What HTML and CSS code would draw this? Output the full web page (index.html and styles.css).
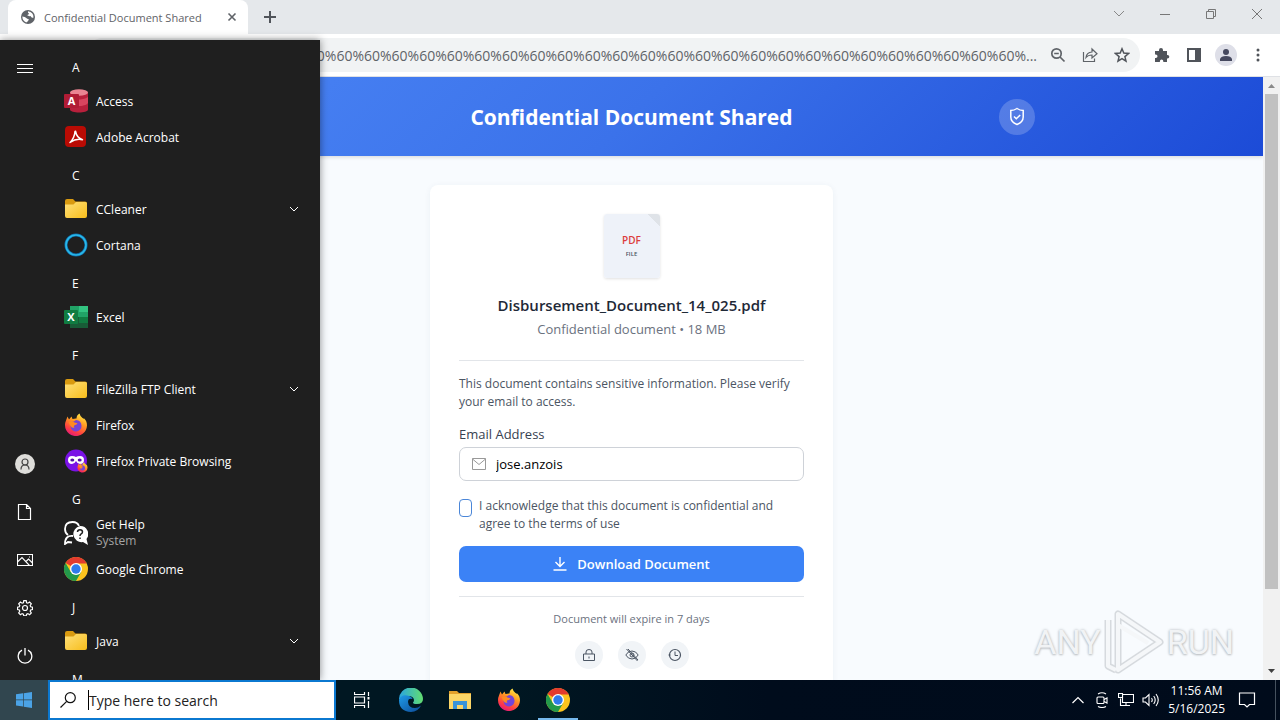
FILE: index.html
```html
<!DOCTYPE html>
<html lang="en">
<head>
<meta charset="utf-8">
<title>Confidential Document Shared</title>
<link rel="stylesheet" href="styles.css">
</head>
<body>
<svg class="defs" aria-hidden="true">
  <defs>
    <linearGradient id="gFolder" x1="0" y1="0" x2="1" y2="1"><stop offset="0" stop-color="#ffe07a"/><stop offset="1" stop-color="#f7bd1b"/></linearGradient>
    <linearGradient id="gFox" x1="0.8" y1="0" x2="0.3" y2="1"><stop offset="0" stop-color="#fff04a"/><stop offset=".4" stop-color="#ff9a22"/><stop offset=".75" stop-color="#ff4040"/><stop offset="1" stop-color="#e3187c"/></linearGradient>
    <linearGradient id="gEdge" x1="0" y1="0" x2="1" y2="0"><stop offset="0" stop-color="#2aa5e0"/><stop offset="1" stop-color="#62dd70"/></linearGradient>
    <linearGradient id="gEdge2" x1="0" y1="0" x2="1" y2="1"><stop offset="0" stop-color="#1f9be8"/><stop offset="1" stop-color="#0c4a97"/></linearGradient>
    <symbol id="folder" viewBox="0 0 24 24"><path d="M1 4q0-2 2-2h6l2.500 2.500H21q2 0 2 2V9H1z" fill="#d99a10"/><path d="M1 7.500h8.500L12 5h9.500Q23 5 23 6.500V19q0 2-2 2H3q-2 0-2-2z" fill="url(#gFolder)"/></symbol>
    <symbol id="firefox" viewBox="0 0 24 24"><path d="M23 12.500A11 11 0 1 1 2 7.500L3.500 3.500 5 6.500 7.500 3.500 8.500 6Q11 5.300 12.500 5.500 12.500 2 15.500.5 16 3 18.500 5 20 6 20.200 5.500 23 8 23 12.500z" fill="url(#gFox)"/><path d="M12 7q5 .3 5.500 5.500a5.500 5.500 0 0 1-11 1Q6 10 8 8.500q1 1 4-1.500z" fill="#7344d8"/><path d="M4.500 9q4-1.500 6 .5l3 .8q-.5 1.700-3 2-1.500.7 0 2.200-3.500 1.500-6-5.500z" fill="#ff8a20"/></symbol>
    <symbol id="chrome" viewBox="0 0 24 24"><circle cx="12" cy="12" r="12" fill="#fcc31e"/><path d="M12 12 1.600 6a12 12 0 0 1 20.800 0L22.400 6.500H12z" fill="#e33b2e"/><path d="M1.600 6A12 12 0 0 0 12 24l5.200-9H12L6.800 15z" fill="#23994b"/><circle cx="12" cy="12" r="6" fill="#fff"/><circle cx="12" cy="12" r="4.700" fill="#2f7bec"/></symbol>
    <symbol id="down" viewBox="0 0 12 12"><path d="M2 4l4 4 4-4" fill="none" stroke="currentColor" stroke-width="1"/></symbol>
  </defs>
</svg>

<div class="desktop">
  <div class="browser">
    <div class="tabstrip">
      <div class="tab">
        <svg class="i16" viewBox="0 0 16 16"><circle cx="8" cy="8" r="7" fill="#5f6368"/><path d="M2.300 7.500q3 .2 4 1.500t2.500 1q-.3 3-2.500 3.600Q2.500 12 2.300 7.500zM8 2.300q-.5 1.700 1 2.200-.5 1.500-2 1.500 1.500 1.500 3.500 1 1 2.500 3 1.500Q13.500 3 8 2.300z" fill="#fff"/></svg>
        <span class="tab-title">Confidential Document Shared</span>
        <button class="plain" aria-label="Close tab"><svg class="i16" viewBox="0 0 16 16"><path d="M4.500 4.500l7 7m0-7l-7 7" stroke="#5f6368" stroke-width="1.600"/></svg></button>
      </div>
      <button class="plain" aria-label="New tab"><svg class="i16" viewBox="0 0 16 16"><path d="M8 2v12M2 8h12" stroke="#50545a" stroke-width="2"/></svg></button>
      <div class="window-buttons">
        <button class="plain" aria-label="Search tabs"><svg class="i16" viewBox="0 0 16 16"><path d="M3 5l5 5 5-5" fill="none" stroke="#888" /></svg></button>
        <button class="plain" aria-label="Minimize"><svg class="i16" viewBox="0 0 16 16"><path d="M3 8.500h10" stroke="#777"/></svg></button>
        <button class="plain" aria-label="Restore"><svg class="i16" viewBox="0 0 16 16"><path d="M3.500 5.500h7v7h-7zM5.500 5.500v-2h7v7h-2" fill="none" stroke="#777"/></svg></button>
        <button class="plain" aria-label="Close"><svg class="i16" viewBox="0 0 16 16"><path d="M3 3l10 10M13 3L3 13" stroke="#777"/></svg></button>
      </div>
    </div>
    <div class="toolbar">
      <div class="omnibox">
        <input class="url" type="text" aria-label="Address" value="%60%60%60%60%60%60%60%60%60%60%60%60%60%60%60%60%60%60%60%60%60%60%60%60%60%60%60%60%60%60%60%...">
        <button class="plain" aria-label="Zoom"><svg class="i16" viewBox="0 0 16 16"><circle cx="6.500" cy="6.500" r="4.700" fill="none" stroke="#5f6368" stroke-width="1.700"/><path d="M4.200 6.500h4.600M10 10l4.500 4.500" stroke="#5f6368" stroke-width="1.700"/></svg></button>
        <button class="plain" aria-label="Share"><svg class="i16" viewBox="0 0 16 16"><path d="M1.500 5v9.500h11v-3M4 10.500q.5-5 6-5.500V2l5 4.700-5 4.300V8q-4 0-6 2.500z" fill="none" stroke="#5f6368" stroke-width="1.200"/></svg></button>
        <button class="plain" aria-label="Bookmark"><svg class="i16" viewBox="0 0 16 16"><path d="M8 1.800l1.800 4.300 4.700.4-3.600 3.100 1.100 4.600L8 11.700l-4 2.500 1.100-4.600L1.500 6.500l4.700-.4z" fill="none" stroke="#50545a" stroke-width="1.500"/></svg></button>
      </div>
      <button class="plain" aria-label="Extensions"><svg class="i16" viewBox="0 0 16 16"><path d="M1 4h4V3a2 2 0 0 1 4 0v1h4v4h.5a1.800 1.800 0 0 1 0 3.600H13V15H9.300v-.7a1.700 1.700 0 0 0-3.400 0v.7H1v-4h.8a1.700 1.700 0 0 0 0-3.400H1z" fill="#50545a"/></svg></button>
      <button class="plain" aria-label="Side panel"><svg class="i16" viewBox="0 0 16 16"><path d="M1 1h14v14H1zM3 3v10h6V3z" fill="#50545a" fill-rule="evenodd"/></svg></button>
      <button class="plain avatar" aria-label="Profile"><svg class="i16" viewBox="0 0 16 16"><circle cx="8" cy="5" r="3" fill="#45485e"/><path d="M2 14v-2q1-3 6-3t6 3v2z" fill="#45485e"/></svg></button>
      <button class="plain" aria-label="Menu"><svg class="i16" viewBox="0 0 16 16"><g fill="#50545a"><circle cx="8" cy="3" r="1.500"/><circle cx="8" cy="8" r="1.500"/><circle cx="8" cy="13" r="1.500"/></g></svg></button>
    </div>
    <div class="viewport">
      <div class="page">
        <header class="banner">
          <div class="banner-inner">
            <h1>Confidential Document Shared</h1>
            <span class="shield"><svg class="i20" viewBox="0 0 20 20" fill="none" stroke="#fff" stroke-width="1.500"><path d="M10 1.500Q7 3.500 3.800 3.500V10q0 5 6.200 7.500 6.200-2.500 6.200-7.500V3.500Q13 3.500 10 1.500zM7 9.500l2.300 2.300L13.200 8"/></svg></span>
          </div>
        </header>
        <main class="card">
          <div class="pdf"><span class="pdf-type">PDF</span><span class="pdf-file">FILE</span></div>
          <h2>Disbursement_Document_14_025.pdf</h2>
          <p class="meta">Confidential document • 18 MB</p>
          <form class="verify">
            <p class="copy">This document contains sensitive information. Please verify your email to access.</p>
            <label class="field-label" for="email">Email Address</label>
            <div class="field">
              <svg class="i14" viewBox="0 0 14 14" fill="none" stroke="#999" stroke-width="1"><path d="M.5 1.500h13v11H.5zM.5 2l6.500 5.500L13.500 2"/></svg>
              <input id="email" type="text" value="jose.anzois">
            </div>
            <div class="agree">
              <input id="agree" type="checkbox">
              <label for="agree">I acknowledge that this document is confidential and agree to the terms of use</label>
            </div>
            <button class="download" type="button"><svg class="i14" viewBox="0 0 14 14" fill="none" stroke="#fff" stroke-width="1.400"><path d="M7 0v9.500M2.500 5L7 9.500 11.500 5M.5 13h13"/></svg>Download Document</button>
          </form>
          <footer class="foot">
            <p>Document will expire in 7 days</p>
            <div class="badges">
              <span class="badge"><svg class="i14" viewBox="0 0 14 14" fill="none" stroke="#4b5563"><path d="M1.500 6h11v6.500h-11zM4 6V4q0-2.500 3-2.500T10 4v2M7 8.500v2"/></svg></span>
              <span class="badge"><svg class="i14" viewBox="0 0 14 14" fill="none" stroke="#4b5563"><path d="M.8 7Q3 3 7 3t6.200 4Q11 11 7 11T.8 7zM1.500 1l11 12M3 1l10 11"/><circle cx="7" cy="7" r="2"/></svg></span>
              <span class="badge"><svg class="i14" viewBox="0 0 14 14" fill="none" stroke="#4b5563"><circle cx="7" cy="7" r="5.500" stroke-width="1.200"/><path d="M7 3.500V7.500h3M.5 7h2"/></svg></span>
            </div>
          </footer>
        </main>
      </div>
      <div class="scrollbar">
        <svg class="arrow" viewBox="0 0 17 17"><path d="M5 11l3.500-4L12 11z" fill="#8a8a8a"/></svg>
        <div class="thumb"></div>
        <svg class="arrow" viewBox="0 0 17 17"><path d="M5 6l3.500 4L12 6z" fill="#404040"/></svg>
      </div>
      <div class="watermark">
        <span>ANY</span>
        <svg viewBox="0 0 60 64" fill="none" stroke-linejoin="round"><g stroke="#c9cdd1" stroke-width="7"><path d="M14 4v56L56 32z"/><path d="M4 10v46l8 4"/></g><g stroke="#f4f6f7" stroke-width="4"><path d="M14 4v56L56 32z"/><path d="M4 10v46l8 4M14 15l30 18"/></g></svg>
        <span>RUN</span>
      </div>
    </div>
  </div>

  <aside class="start">
    <nav class="rail" aria-label="Start">
      <button class="plain" aria-label="Expand"><svg class="i16" viewBox="0 0 16 16"><path d="M0 4.500h16M0 8.500h16M0 12.500h16" stroke="#fff"/></svg></button>
      <span class="rail-space"></span>
      <button class="plain" aria-label="User"><svg class="i20" viewBox="0 0 20 20"><circle cx="10" cy="10" r="10" fill="#deddda"/><g fill="none" stroke="#444" stroke-width="1.200"><circle cx="10" cy="8" r="3"/><path d="M6 15.500q0-4.500 4-4.500t4 4.500"/></g></svg></button>
      <button class="plain" aria-label="Documents"><svg class="i16" viewBox="0 0 16 16"><path d="M1.500.5h8l4 4v11h-12zM9.500.5v4h4" fill="none" stroke="#fff" stroke-width="1.200"/></svg></button>
      <button class="plain" aria-label="Pictures"><svg class="i16" viewBox="0 0 16 16"><path d="M.5 2.500h15v11H.5zM.5 10L5 5.500l7.500 8M9 9.500L11.500 7l4 4M12 5h1" fill="none" stroke="#fff" stroke-width="1.100"/></svg></button>
      <button class="plain" aria-label="Settings"><svg class="i16" viewBox="0 0 16 16" fill="none" stroke="#fff" stroke-width="1.200"><circle cx="8" cy="8" r="2.500"/><path d="M6.800.7h2.400l.4 2 1.300.5 1.700-1.100 1.700 1.700-1.100 1.700.5 1.300 1.800.4v2.400l-1.800.4-.5 1.300 1.100 1.700-1.700 1.700-1.700-1.100-1.300.5-.4 1.800H6.800l-.4-1.800-1.300-.5L3.400 14.700l-1.700-1.700 1.100-1.700L2.300 10l-1.800-.4V7.200l1.800-.4.500-1.300L1.700 3.800l1.700-1.700 1.700 1.100 1.300-.5z"/></svg></button>
      <button class="plain" aria-label="Power"><svg class="i16" viewBox="0 0 16 16" fill="none" stroke="#fff" stroke-width="1.300"><path d="M8 0v7.500M5 2.200a6.800 6.800 0 1 0 6 0"/></svg></button>
    </nav>
    <ul class="apps">
      <li class="letter">A</li>
      <li><svg class="i24" viewBox="0 0 24 24"><path d="M6 3.500v17c0 4 18 4 18 0v-17z" fill="#b8203c"/><path d="M6 9v6c3 3 15 3 18-1V8c-4 3-14 4-18 1z" fill="#d9455f"/><ellipse cx="15" cy="3.500" rx="9" ry="3.300" fill="#ea8492"/><rect y="5" width="15" height="14" rx="1" fill="#b01c35"/><text x="7.500" y="16" class="glyph">A</text></svg>Access</li>
      <li><svg class="i24" viewBox="0 0 24 24"><rect x="1" y="1" width="21" height="21" rx="4" fill="#b90b04"/><path d="M6 17.500Q10.500 13 11 6.500q.8-1 .8 1 1 5 6.700 7.300-6-1.800-12.500 2.700z" fill="none" stroke="#fff" stroke-width="1.500" stroke-linejoin="round"/></svg>Adobe Acrobat</li>
      <li class="letter">C</li>
      <li><svg class="i24"><use href="#folder"/></svg>CCleaner<svg class="i12 more"><use href="#down"/></svg></li>
      <li><svg class="i24" viewBox="0 0 24 24"><circle cx="12" cy="12" r="10" fill="none" stroke="#0f6fae" stroke-width="3"/><circle cx="12" cy="12" r="10" fill="none" stroke="#29b9e8" stroke-width="1.600"/></svg>Cortana</li>
      <li class="letter">E</li>
      <li><svg class="i24" viewBox="0 0 24 24"><path d="M6 1h9v11H6z" fill="#21a366"/><path d="M15 1h9v6h-9z" fill="#33c481"/><path d="M15 7h9v5h-9z" fill="#21a366"/><path d="M6 12h9v11H6z" fill="#185c37"/><path d="M15 12h9v6h-9z" fill="#107c41"/><path d="M15 18h9v5h-9z" fill="#185c37"/><rect y="5" width="14" height="14" rx="1" fill="#107c41"/><text x="7" y="16" class="glyph">X</text></svg>Excel</li>
      <li class="letter">F</li>
      <li><svg class="i24"><use href="#folder"/></svg>FileZilla FTP Client<svg class="i12 more"><use href="#down"/></svg></li>
      <li><svg class="i24"><use href="#firefox"/></svg>Firefox</li>
      <li><svg class="i24" viewBox="0 0 24 24"><circle cx="12" cy="11.500" r="11" fill="#7a12e6"/><path d="M4 11q0-4 4-4 2.500 0 4 1 1.500-1 4-1 4 0 4 4t-4 4q-2.500 0-4-3-1.500 3-4 3-4 0-4-4z" fill="#fff"/><ellipse cx="8.300" cy="11" rx="2" ry="1.500" fill="#5310a8"/><ellipse cx="15.700" cy="11" rx="2" ry="1.500" fill="#5310a8"/><svg x="13" y="13" width="11" height="11"><use href="#firefox"/></svg></svg>Firefox Private Browsing</li>
      <li class="letter">G</li>
      <li><svg class="i24" viewBox="0 0 24 24"><path d="M4 14q-3-2-3-6 0-7 7.500-7 5 0 6.500 4M9 15q-8-1-8 8l3-2 4 .5" fill="none" stroke="#fff" stroke-width="1.800"/><path d="M16 5a8 8 0 0 1 6.500 13l1.500 6-5-3A8 8 0 1 1 16 5z" fill="#fff"/><path d="M13.500 11q0-2.300 2.500-2.300t2.500 2.300q0 1.200-1.500 2-1 .7-1 2M16 16.500v1.600" fill="none" stroke="#1f1f1f" stroke-width="1.500"/></svg><span class="two">Get Help<small>System</small></span></li>
      <li><svg class="i24"><use href="#chrome"/></svg>Google Chrome</li>
      <li class="letter">J</li>
      <li><svg class="i24"><use href="#folder"/></svg>Java<svg class="i12 more"><use href="#down"/></svg></li>
      <li class="letter">M</li>
    </ul>
  </aside>
</div>

<div class="taskbar">
  <button class="plain start-button" aria-label="Start"><svg class="i16" viewBox="0 0 16 16"><path d="M0 2.300l7-1v6.300H0zM7.700 1.200L16 0v7.600H7.700zM0 8.300h7v6.300l-7-1zM7.700 8.300H16V16l-8.300-1.200z" fill="#4ba3e6"/></svg></button>
  <div class="search">
    <svg class="i16" viewBox="0 0 16 16" fill="none" stroke="#111" stroke-width="1.200"><circle cx="10.300" cy="5.700" r="5"/><path d="M6.700 9.300L.5 15.500"/></svg>
    <input type="text" aria-label="Search" placeholder="Type here to search">
  </div>
  <div class="pins">
    <button class="plain" aria-label="Task view"><svg class="i16" viewBox="0 0 16 16" fill="none" stroke="#fff" stroke-width="1.200"><path d="M.5 0v2.500h10V0M.5 5h10v6H.5zM.5 16v-2.500h10V16M14.500 0v4M14.500 9v7"/><path d="M13.500 5h2v2.500h-2z" fill="#fff" stroke="none"/></svg></button>
    <button class="plain" aria-label="Edge"><svg class="i24" viewBox="0 0 24 24"><path d="M0 12A12 12 0 0 1 24 11q0 5-6 5-4 0-4-1.500 1-1 1-2.500-.5-4-6-4Q2 8 0 12z" fill="url(#gEdge)"/><path d="M0 12Q2 6.500 8 7.500q5 1 5.500 3.500Q9 9.500 9 14q.5 6 7 6 3 0 6-2.500Q19 24 12 24 0 23.500 0 12z" fill="url(#gEdge2)"/></svg></button>
    <button class="plain" aria-label="File Explorer"><svg class="i24" viewBox="0 0 24 24"><path d="M1 3h8l2 2h12v4H1z" fill="#e2a12c"/><path d="M1 6h22v15H1z" fill="#fbd667"/><path d="M5 21v-8h14v8h-4v-4H9v4z" fill="#3a94d8"/></svg></button>
    <button class="plain" aria-label="Firefox"><svg class="i24"><use href="#firefox"/></svg></button>
    <button class="plain active" aria-label="Chrome"><svg class="i24"><use href="#chrome"/></svg></button>
  </div>
  <div class="tray">
    <svg class="i16" viewBox="0 0 16 16"><path d="M2.500 11L8 5.500l5.500 5.500" fill="none" stroke="#fff" stroke-width="1.200"/></svg>
    <svg class="i16" viewBox="0 0 16 16" fill="none" stroke="#fff" stroke-width="1.100"><rect x="3" y="5" width="7" height="6.500" rx="1"/><path d="M10 7.500l3-1.500v5l-3-1.500M4 2q4-2.500 8 0M4 14.500q4 2 8 0"/></svg>
    <svg class="i16" viewBox="0 0 16 16" fill="none" stroke="#fff" stroke-width="1.100"><path d="M4.500 2.500h11v8h-11v-8M8 10.500v3M5 13.500h7M2.500 6.500v7h3"/><path d="M.5 1.500h4v4h-4z" fill="#031523"/></svg>
    <svg class="i18" viewBox="0 0 18 18" fill="none" stroke="#fff" stroke-width="1.100"><path d="M1 7h2.500L7 3.500v11L3.500 11H1zM9.500 7q1.500 2 0 4M11.700 5q3 4 0 8M14 3q4.500 6 0 12"/></svg>
    <div class="clock"><span>11:56 AM</span><span>5/16/2025</span></div>
    <svg class="i18 notes" viewBox="0 0 18 18"><path d="M1.500 2h15v11.500h-5L9 16l-2.500-2.500h-5z" fill="none" stroke="#fff" stroke-width="1.200"/></svg>
  </div>
</div>
</body>
</html>
```

FILE: styles.css
```css
* { box-sizing: border-box; }
body { margin: 0; height: 100vh; display: flex; flex-direction: column; overflow: hidden; font-family: "Open Sans", "Noto Sans", sans-serif; font-size: 12px; color: #1f2937; }
h1, h2, p, ul { margin: 0; padding: 0; }
input, button { font: inherit; }
svg { display: block; flex: none; }
.defs { position: absolute; width: 0; height: 0; }
.i12 { width: 12px; height: 12px; }
.i14 { width: 14px; height: 14px; }
.i16 { width: 16px; height: 16px; }
.i18 { width: 18px; height: 18px; }
.i20 { width: 20px; height: 20px; }
.i24 { width: 24px; height: 24px; }
.plain { display: flex; align-items: center; justify-content: center; padding: 0; border: 0; background: none; }

.desktop { position: relative; flex: 1; min-height: 0; display: flex; }
.browser { flex: 1; min-width: 0; display: flex; flex-direction: column; background: #fff; }

.tabstrip { height: 34px; display: flex; align-items: center; background: #e5e8eb; padding-left: 8px; gap: 14px; }
.tab { width: 240px; height: 34px; display: flex; align-items: center; padding: 0 8px 0 12px; gap: 8px; background: #fff; border-radius: 8px 8px 0 0; }
.tab-title { flex: 1; white-space: nowrap; font-size: 11px; color: #5f6368; }
.window-buttons { margin-left: auto; display: flex; align-self: stretch; padding-bottom: 6px; }
.window-buttons .plain { width: 46px; }

.toolbar { height: 43px; display: flex; align-items: center; gap: 16px; padding: 0 14px 0 86px; border-bottom: 1px solid #dfe1e5; }
.omnibox { flex: 1; min-width: 0; height: 34px; display: flex; align-items: center; gap: 16px; padding: 0 10px 0 20px; margin-right: -2px; border-radius: 17px; background: #f1f3f4; }
.url { flex: 1; min-width: 0; border: 0; padding: 0; margin-right: -3px; background: none; text-align: right; font-size: 14px; color: #5f6368; }
.avatar { width: 22px; height: 22px; margin: 0 -3px; border-radius: 50%; background: #dedfe8; }

.viewport { position: relative; flex: 1; min-height: 0; display: flex; }
.page { flex: 1; min-width: 0; overflow: hidden; background: #f8fbfe; }
.banner { padding: 0 24px; background: linear-gradient(135deg, #4f8af8, #3b72ea 50%, #1c4bd7); box-shadow: 0 1px 4px rgba(0, 0, 0, .15); }
.banner-inner { max-width: 807px; height: 79px; margin: 0 auto; display: grid; grid-template-columns: 1fr auto 1fr; align-items: center; }
.banner h1 { grid-column: 2; font-size: 21px; line-height: 28px; font-weight: 700; color: #fff; }
.shield { justify-self: end; width: 36px; height: 36px; display: flex; align-items: center; justify-content: center; border-radius: 50%; background: rgba(255, 255, 255, .2); }

.card { width: 403px; max-width: 100%; margin: 29px auto; padding: 29px; background: #fff; border-radius: 8px; box-shadow: 0 1px 6px rgba(30, 60, 100, .06); text-align: center; line-height: 18px; }
.pdf { width: 56px; height: 64px; margin: 0 auto 15px; display: flex; flex-direction: column; align-items: center; justify-content: center; border-radius: 3px; background: linear-gradient(45deg, #eef2f9 0 90%, #dfe3e8 90%); box-shadow: 0 1px 3px rgba(0, 0, 0, .12); }
.pdf-type { font-size: 10px; line-height: 16px; font-weight: 600; color: #dc3c3c; }
.pdf-file { font-size: 6px; line-height: 13px; font-weight: 600; color: #4b5563; }
.card h2 { font-size: 15px; line-height: 24px; font-weight: 600; color: #1f2937; }
.meta { margin-top: 3px; font-size: 13px; color: #6b7280; }
.verify { margin-top: 22px; padding-top: 14px; border-top: 1px solid #e2e5e9; display: flex; flex-direction: column; text-align: left; font-size: 13px; }
.copy, .agree { font-size: 12px; color: #4b5563; }
.field-label { margin-top: 14px; color: #374151; }
.field { height: 34px; margin-top: 4px; padding: 0 12px; display: flex; align-items: center; gap: 10px; border: 1px solid #ced2d8; border-radius: 7px; }
.field input { flex: 1; min-width: 0; padding: 0; border: 0; color: #000; }
.agree { margin-top: 16px; display: flex; gap: 7px; align-items: flex-start; }
.agree input { appearance: none; flex: none; width: 13px; height: 18px; margin: 2px 0 0; border: 1px solid #4a86d8; border-radius: 4px; background: #fff; }
.download { height: 36px; margin-top: 13px; display: flex; align-items: center; justify-content: center; gap: 10px; border: 0; border-radius: 7px; background: #3b82f6; color: #fff; font-size: 13px; font-weight: 600; }
.foot { margin-top: 14px; padding-top: 13px; border-top: 1px solid #e2e5e9; font-size: 11px; color: #6b7280; }
.badges { margin-top: 13px; display: flex; justify-content: center; gap: 15px; }
.badge { width: 28px; height: 28px; display: flex; align-items: center; justify-content: center; border-radius: 50%; background: #f1f4f7; }

.scrollbar { width: 17px; display: flex; flex-direction: column; background: #f1f1f1; }
.arrow { width: 17px; height: 17px; }
.thumb { flex: 0 1 495px; margin: 0 2px auto; background: #c1c1c1; }

.watermark { position: absolute; right: 46px; bottom: 6px; display: flex; align-items: center; gap: 3px; font-family: "Liberation Sans Narrow", "Roboto", sans-serif; font-size: 34px; line-height: 64px; color: #f1f3f5; text-shadow: 0 0 3px #b4b8bc, 0 1px 2px #c4c8cc; }
.watermark svg { width: 60px; height: 64px; opacity: .7; }

.start { position: absolute; left: 0; top: 40px; bottom: 0; width: 320px; display: flex; background: #1f1f1f; color: #fff; box-shadow: 0 0 8px rgba(0, 0, 0, .45); overflow: hidden; }
.start, .taskbar { z-index: 1; }
.rail { width: 48px; padding: 4px 0 0 2px; display: flex; flex-direction: column; }
.rail .plain { height: 48px; flex: none; }
.rail-space { flex: 1; }
.apps { flex: 1; padding: 7px 20px 0 16px; list-style: none; overflow: hidden; }
.apps li { height: 36px; display: flex; align-items: center; gap: 8px; white-space: nowrap; }
.apps .letter { padding: 5px 0 0 8px; }
.more { margin-left: auto; }
.two { display: flex; flex-direction: column; line-height: 16px; }
.two small { font-size: 12px; color: #a5a5a5; }
.glyph { font-size: 11px; font-weight: 700; fill: #fff; text-anchor: middle; }

.taskbar { position: relative; height: 40px; flex: none; display: flex; background: linear-gradient(90deg, #001722 40%, #000c1c 60%, #000b1b); color: #fff; }
.start-button { width: 48px; background: #31464f; }
.search { width: 288px; display: flex; align-items: center; gap: 12px; padding: 0 10px; border: 2px solid #0b78d0; background: #fff; }
.search input { flex: 1; min-width: 0; height: 20px; padding: 0; border: 0; border-left: 1px solid #000; font-size: 14px; }
.search input::placeholder { color: #222; opacity: 1; }
.pins { display: flex; padding-left: 1px; }
.pins .plain { width: 49px; }
.pins .active { background: linear-gradient(#76b9ed, #76b9ed) center bottom / 40px 2px no-repeat; }
.tray { margin-left: auto; display: flex; align-items: center; gap: 8px; padding-right: 4px; margin-right: 4px; border-right: 1px solid #45515e; }
.clock { display: flex; flex-direction: column; align-items: center; line-height: 18px; }
.notes { margin: 0 15px 0 5px; }
```
